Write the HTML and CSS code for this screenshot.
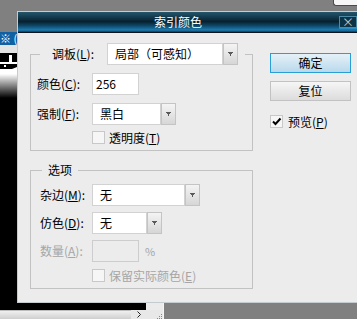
FILE: index.html
```html
<!DOCTYPE html>
<html lang="zh-CN">
<head>
<meta charset="UTF-8">
<meta name="viewport" content="width=device-width, initial-scale=1.0">
<title>索引颜色</title>
<link rel="stylesheet" href="styles.css">
</head>
<body>

<div class="desktop">
    <!-- window peeking in at the top right -->
    <div class="corner-win"></div>

    <!-- document window behind the dialog -->
    <div class="doc-win">
        <div class="doc-title">※ (</div>
        <div class="doc-tools"></div>
        <div class="doc-main">
            <div class="doc-canvas">
                <svg width="146" height="257" viewBox="0 0 146 257">
                    <defs>
                        <linearGradient id="fade" x1="0" y1="0" x2="0" y2="1">
                            <stop offset="0" stop-color="#fff"/>
                            <stop offset="1" stop-color="#000"/>
                        </linearGradient>
                    </defs>
                    <rect width="146" height="257" fill="#000"/>
                    <rect y="9" width="146" height="12" fill="#fff"/>
                    <rect y="21" width="146" height="24" fill="url(#fade)"/>
                    <path d="M9 2 H12 L12 10 H9 Z" fill="#fff"/>
                    <path d="M0 11 H17 V14 L12 16 H0 Z" fill="#000"/>
                    <rect x="4" y="12" width="2" height="2" fill="#fff"/>
                </svg>
            </div>
            <div class="doc-vscroll"></div>
        </div>
        <div class="doc-hscroll">
            <span class="hs-track"></span>
            <svg class="hs-arrow" width="4" height="7" viewBox="0 0 4 7"><path d="M0.5 0.5 L3.5 3.5 L0.5 6.5" fill="none" stroke="#222" stroke-width="1"/></svg>
            <svg class="hs-grip" width="5" height="5" viewBox="0 0 5 5"><rect x="4" y="0" width="1" height="1" fill="#888"/><rect x="2" y="2" width="1" height="1" fill="#888"/><rect x="4" y="2" width="1" height="1" fill="#888"/><rect x="0" y="4" width="1" height="1" fill="#888"/><rect x="2" y="4" width="1" height="1" fill="#888"/><rect x="4" y="4" width="1" height="1" fill="#888"/></svg>
        </div>
    </div>

    <!-- Indexed colour dialog -->
    <div class="dialog">
        <div class="dlg-title">
            <span class="dlg-caption">索引颜色</span>
            <span class="dlg-close">×</span>
        </div>
        <div class="dlg-body">
            <div class="dlg-left">
                <fieldset class="group group-palette">
                    <legend class="group-head">
                        <div class="row">
                            <span class="lbl">调板(<u>L</u>):</span>
                            <span class="field combo-field palette-field">局部（可感知）</span>
                            <span class="combo-btn"><svg width="5" height="4" viewBox="0 0 5 4"><path d="M0 0 H5 V1 H4 V2 H3 V4 H2 V2 H1 V1 H0 Z" fill="#5a5a5a"/></svg></span>
                        </div>
                    </legend>
                    <div class="row">
                        <span class="lbl">颜色(<u>C</u>):</span>
                        <span class="field text-field">256</span>
                    </div>
                    <div class="row">
                        <span class="lbl">强制(<u>F</u>):</span>
                        <span class="field combo-field force-field">黑白</span>
                        <span class="combo-btn"><svg width="5" height="4" viewBox="0 0 5 4"><path d="M0 0 H5 V1 H4 V2 H3 V4 H2 V2 H1 V1 H0 Z" fill="#5a5a5a"/></svg></span>
                    </div>
                    <div class="row row-check">
                        <span class="cb"></span>
                        <span>透明度(<u>T</u>)</span>
                    </div>
                </fieldset>

                <fieldset class="group group-options">
                    <legend class="group-title">选项</legend>
                    <div class="row">
                        <span class="lbl">杂边(<u>M</u>):</span>
                        <span class="field combo-field matte-field">无</span>
                        <span class="combo-btn"><svg width="5" height="4" viewBox="0 0 5 4"><path d="M0 0 H5 V1 H4 V2 H3 V4 H2 V2 H1 V1 H0 Z" fill="#5a5a5a"/></svg></span>
                    </div>
                    <div class="row">
                        <span class="lbl">仿色(<u>D</u>):</span>
                        <span class="field combo-field dither-field">无</span>
                        <span class="combo-btn"><svg width="5" height="4" viewBox="0 0 5 4"><path d="M0 0 H5 V1 H4 V2 H3 V4 H2 V2 H1 V1 H0 Z" fill="#5a5a5a"/></svg></span>
                    </div>
                    <div class="row disabled">
                        <span class="lbl">数量(<u>A</u>):</span>
                        <span class="field text-field field-off"></span>
                        <span class="pct">%</span>
                    </div>
                    <div class="row row-check disabled">
                        <span class="cb"></span>
                        <span>保留实际颜色(<u>E</u>)</span>
                    </div>
                </fieldset>
            </div>

            <div class="dlg-right">
                <div class="btn btn-default">确定</div>
                <div class="btn">复位</div>
                <div class="preview">
                    <span class="cb cb-on"><svg width="11" height="11" viewBox="0 0 11 11"><path d="M2 5.5 L4.5 8 L9.5 2.5" fill="none" stroke="#000" stroke-width="2"/></svg></span>
                    <span>预览(<u>P</u>)</span>
                </div>
            </div>
        </div>
    </div>
</div>

</body>
</html>
```

FILE: styles.css
```css
* {
    box-sizing: border-box;
}
body {
    margin: 0;
    font-family: "Noto Sans CJK SC", "Liberation Sans", sans-serif;
    font-size: 12px;
    line-height: 14px;
    color: #000;
}
.desktop {
    position: relative;
    width: 357px;
    height: 319px;
    overflow: hidden;
    background-color: #808080;
}

/* background windows */
.corner-win {
    position: absolute;
    top: 0;
    right: 0;
    width: 24px;
    height: 6px;
    background-color: #f6f6f6;
    border-left: 1px solid #4a4a4a;
    border-bottom: 1px solid #4a4a4a;
    border-bottom-left-radius: 3px;
}
.doc-win {
    position: absolute;
    left: 0;
    top: 32px;
    width: 164px;
    height: 287px;
    display: flex;
    flex-direction: column;
    background-color: #ececec;
    border-right: 1px solid #f4f4f4;
}
.doc-title {
    height: 13px;
    background-color: #1060a2;
    color: #fff;
    font-size: 11px;
    line-height: 13px;
}
.doc-tools {
    height: 8px;
    background-color: #e4e4e4;
}
.doc-main {
    flex: 1;
    display: flex;
    min-height: 0;
}
.doc-canvas {
    width: 146px;
    overflow: hidden;
    background-color: #000;
}
.doc-canvas svg {
    display: block;
}
.doc-vscroll {
    flex: 1;
    background-color: #ebebeb;
}
.doc-hscroll {
    height: 9px;
    display: flex;
    align-items: center;
    background-color: #e8e8e8;
}
.hs-track {
    width: 131px;
    height: 9px;
    background: linear-gradient(#f0f0f0, #cfcfcf);
    border-top: 1px solid #bdbdbd;
}
.hs-arrow {
    display: block;
    margin-left: 6px;
}
.hs-grip {
    display: block;
    margin-left: 16px;
    margin-top: 3px;
}

/* dialog */
.dialog {
    position: absolute;
    left: 17px;
    top: 11px;
    width: 345px;
    height: 292px;
    background-color: #ececec;
    border: 1px solid #c4ccd0;
}
.dlg-title {
    height: 21px;
    display: flex;
    align-items: center;
    padding-left: 136px;
    background: linear-gradient(#24566c 0%, #113548 30%, #08202e 48%, #0f4a6c 70%, #1b7db2 90%, #0c3a58 100%);
    border-bottom: 1px solid #06151f;
    color: #fff;
}
.dlg-close {
    margin-left: auto;
    margin-right: 4px;
    width: 18px;
    height: 12px;
    border: 1px solid #4f8aa4;
    background-color: #0d3347;
    color: #b9ccd6;
    font-size: 12px;
    line-height: 10px;
    text-align: center;
    box-shadow: 0 1px 0 #2a8cc0;
}
.dlg-body {
    display: flex;
    padding: 10px 0 0 12px;
}
.dlg-left {
    width: 223px;
}
.dlg-right {
    width: 81px;
    margin-left: 17px;
    padding-top: 10px;
    display: flex;
    flex-direction: column;
}

/* group boxes */
.group {
    margin: 0;
    padding: 0 0 6px 6px;
    min-width: 0;
    border: 1px solid #c2c2c2;
}
.group-head {
    margin-left: 3px;
    padding: 0 7px 0 12px;
}
.group-title {
    margin-left: 5px;
    padding: 0 6px;
    line-height: 14px;
}
.group-options {
    margin-top: 12px;
}
.row {
    display: flex;
    align-items: center;
    height: 22px;
}
.group-palette .row {
    margin-top: 8px;
}
.group-options .row {
    margin-top: 6px;
}
.group-options .row:first-of-type {
    margin-top: 7px;
}
.group-head .row {
    margin-top: 0;
}
.group .row-check {
    height: 13px;
    margin-top: 6px;
    padding-left: 55px;
}
.group-options .row-check {
    margin-top: 7px;
}
.lbl {
    flex: none;
    width: 55px;
    white-space: nowrap;
}
.group-options .lbl {
    padding-left: 3px;
}
.disabled {
    color: #a6a6a6;
}

/* fields */
.field {
    flex: none;
    height: 22px;
    padding-left: 7px;
    line-height: 20px;
    background-color: #fff;
    border: 1px solid #d2d2d2;
    white-space: nowrap;
    overflow: hidden;
}
.text-field {
    width: 47px;
    padding-left: 3px;
}
.field-off {
    background-color: #ececec;
    border-color: #cdcdcd;
}
.palette-field {
    width: 116px;
}
.force-field {
    width: 69px;
}
.matte-field {
    width: 93px;
}
.dither-field {
    width: 55px;
}
.combo-btn {
    flex: none;
    width: 15px;
    height: 22px;
    display: flex;
    justify-content: center;
    padding-top: 8px;
    background: linear-gradient(#f4f4f4, #d6d6d6);
    border: 1px solid #c4c4c4;
}
.combo-btn svg {
    display: block;
}
.pct {
    margin-left: 6px;
    font-size: 11px;
}
.cb {
    flex: none;
    width: 13px;
    height: 13px;
    margin-right: 4px;
    background-color: #f6f6f6;
    border: 1px solid #c8c8c8;
}
.cb-on svg {
    display: block;
}

/* right column */
.btn {
    height: 20px;
    line-height: 18px;
    text-align: center;
    background: linear-gradient(#f6f6f6, #dcdcdc);
    border: 1px solid #c2c2c2;
}
.btn + .btn {
    margin-top: 8px;
}
.btn-default {
    background: linear-gradient(#e6f1f8, #b9d9eb);
    border-color: #2a9fd6;
}
.preview {
    display: flex;
    align-items: center;
    height: 13px;
    margin-top: 14px;
}
.preview .cb {
    margin-right: 5px;
}
```
